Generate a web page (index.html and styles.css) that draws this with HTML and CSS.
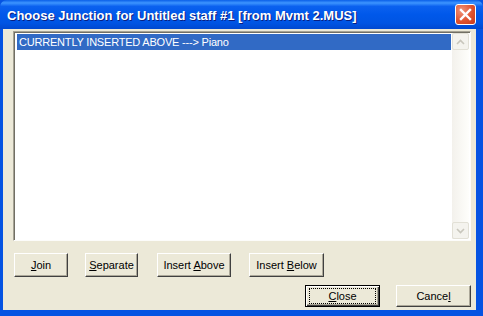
FILE: index.html
```html
<!DOCTYPE html>
<html lang="en">
<head>
    <meta charset="UTF-8">
    <title>Choose Junction</title>
    <link rel="stylesheet" href="styles.css">
</head>
<body>
    <div class="window">
        <div class="titlebar">
            <span class="title">Choose Junction for Untitled staff #1 [from Mvmt 2.MUS]</span>
            <div class="close-x">
                <svg width="13" height="13" viewBox="0 0 13 13">
                    <path d="M2 2 L11 11 M11 2 L2 11" stroke="#fff" stroke-width="2.4" stroke-linecap="square"/>
                </svg>
            </div>
        </div>
        <div class="client">
            <div class="listbox">
                <div class="items">
                    <div class="item selected">CURRENTLY INSERTED ABOVE ---&gt; Piano</div>
                </div>
                <div class="scrollbar">
                    <div class="arrow">
                        <svg width="9" height="6" viewBox="0 0 9 6"><path d="M1 5 L4.5 1.5 L8 5" fill="none" stroke="#c8c6bc" stroke-width="1.6"/></svg>
                    </div>
                    <div class="track"></div>
                    <div class="arrow">
                        <svg width="9" height="6" viewBox="0 0 9 6"><path d="M1 1 L4.5 4.5 L8 1" fill="none" stroke="#c8c6bc" stroke-width="1.6"/></svg>
                    </div>
                </div>
            </div>
            <div class="row1">
                <button class="btn w-join"><u>J</u>oin</button>
                <button class="btn w-sep"><u>S</u>eparate</button>
                <button class="btn w-above">Insert <u>A</u>bove</button>
                <button class="btn w-below">Insert <u>B</u>elow</button>
            </div>
            <div class="row2">
                <button class="btn default"><span class="focus"><u>C</u>lose</span></button>
                <button class="btn">Cance<u>l</u></button>
            </div>
        </div>
    </div>
</body>
</html>
```

FILE: styles.css
```css
body {
    margin: 0;
    width: 483px;
    height: 316px;
    overflow: hidden;
    font-family: "Liberation Sans", Arial, sans-serif;
}
.window {
    width: 483px;
    height: 316px;
    background: #0553e2;
    display: flex;
    flex-direction: column;
    box-sizing: border-box;
    padding: 0 7px 6px 3px;
}
.titlebar {
    height: 29px;
    margin: 0 -7px 0 -3px;
    background: linear-gradient(#0a5fe8 0%, #3d95ff 10%, #0b61ef 22%, #0058ea 50%, #0054e3 80%, #0048d0 100%);
    display: flex;
    align-items: center;
    padding: 0 7px 0 7px;
    border-radius: 7px 7px 0 0;
}
.title {
    flex: 1;
    color: #fff;
    font-weight: bold;
    font-size: 13px;
    text-shadow: 1px 1px #0a1e80;
    padding-top: 1px;
}
.close-x {
    width: 19px;
    height: 19px;
    border: 1px solid #fff;
    border-radius: 3px;
    background: radial-gradient(circle at 30% 30%, #f0947a, #e0532f 55%, #c8391a);
    display: flex;
    align-items: center;
    justify-content: center;
}
.client {
    flex: 1;
    background: #ece9d8;
    padding: 2px 5px 0 10px;
}
.listbox {
    height: 210px;
    box-sizing: border-box;
    border: 1px solid;
    border-color: #a5a294 #fcfcfa #fcfcfa #a5a294;
    background: #fff;
    display: flex;
    padding: 1px;
    box-shadow: inset 1px 1px #716f64;
}
.items {
    flex: 1;
    padding: 1px 1px 0 2px;
}
.item {
    height: 16px;
    line-height: 16px;
    font-size: 11px;
    letter-spacing: -0.2px;
    padding-left: 2px;
}
.selected {
    background: #316ac5;
    color: #fff;
}
.scrollbar {
    width: 17px;
    display: flex;
    flex-direction: column;
    background: linear-gradient(90deg, #f3f1ec, #fefefb);
}
.track {
    flex: 1;
}
.arrow {
    height: 17px;
    box-sizing: border-box;
    border: 1px solid #e2e0d6;
    border-radius: 2px;
    background: #f4f3ee;
    display: flex;
    align-items: center;
    justify-content: center;
}
.row1 {
    display: flex;
    gap: 18px;
    margin-top: 12px;
    margin-left: 1px;
}
.row2 {
    display: flex;
    justify-content: flex-end;
    gap: 16px;
    margin-top: 8px;
}
.btn {
    height: 24px;
    box-sizing: border-box;
    background: #ece9d8;
    font-family: "Liberation Sans", Arial, sans-serif;
    font-size: 11px;
    color: #000;
    padding: 0;
    border: 1px solid;
    border-color: #fff #404040 #404040 #fff;
    box-shadow: inset -1px -1px #aca899;
    width: 75px;
}
.row2 .btn {
    height: 22px;
}
.w-join { width: 54px; }
.w-sep { width: 53px; margin-left: -1px; }
.w-above { width: 74px; margin-left: 1px; }
.w-below { width: 75px; }
.default {
    border: 1px solid #000;
    box-shadow: inset 1px 1px #fff, inset -1px -1px #404040, inset -2px -2px #aca899;
}
.focus {
    display: block;
    margin: 0 3px;
    border: 1px dotted #000;
    line-height: 14px;
}
```
